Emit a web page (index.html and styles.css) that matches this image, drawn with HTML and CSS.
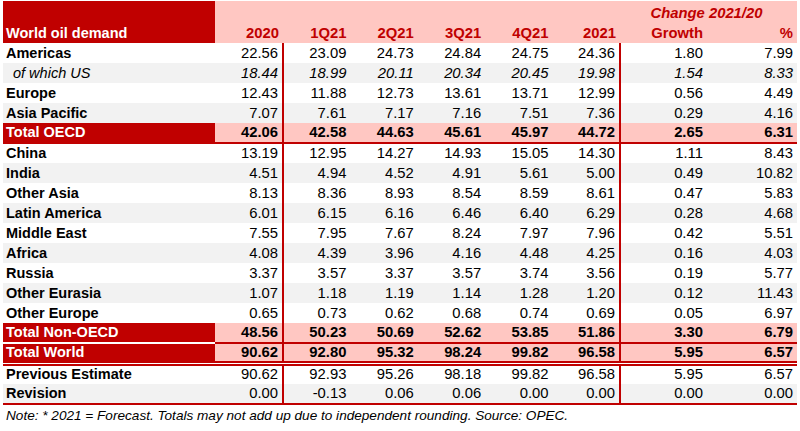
FILE: index.html
```html
<!DOCTYPE html>
<html>
<head>
<meta charset="utf-8">
<link rel="stylesheet" href="styles.css">
</head>
<body>
<div class="wrap">
<table class="t">
  <colgroup>
    <col class="c-label"><col class="c-n0"><col class="c-n"><col class="c-n"><col class="c-n"><col class="c-n"><col class="c-n"><col class="c-g"><col class="c-p">
  </colgroup>
  <thead>
    <tr class="h1">
      <th class="hl" rowspan="2">World oil demand</th>
      <th class="hn"></th><th class="hn"></th><th class="hn"></th><th class="hn"></th><th class="hn"></th><th class="hn"></th>
      <th class="hn chg" colspan="2">Change 2021/20</th>
    </tr>
    <tr class="h2">
      <th class="hn">2020</th><th class="hn">1Q21</th><th class="hn">2Q21</th><th class="hn">3Q21</th><th class="hn">4Q21</th><th class="hn">2021</th><th class="hn">Growth</th><th class="hn">%</th>
    </tr>
  </thead>
  <tbody>
    <tr class="w"><td class="l">Americas</td><td>22.56</td><td class="vl">23.09</td><td>24.73</td><td>24.84</td><td>24.75</td><td>24.36</td><td class="vl">1.80</td><td>7.99</td></tr>
    <tr class="g it"><td class="l sub">of which US</td><td>18.44</td><td class="vl">18.99</td><td>20.11</td><td>20.34</td><td>20.45</td><td>19.98</td><td class="vl">1.54</td><td>8.33</td></tr>
    <tr class="w"><td class="l">Europe</td><td>12.43</td><td class="vl">11.88</td><td>12.73</td><td>13.61</td><td>13.71</td><td>12.99</td><td class="vl">0.56</td><td>4.49</td></tr>
    <tr class="g"><td class="l">Asia Pacific</td><td>7.07</td><td class="vl">7.61</td><td>7.17</td><td>7.16</td><td>7.51</td><td>7.36</td><td class="vl">0.29</td><td>4.16</td></tr>
    <tr class="tot oecd"><td class="l">Total OECD</td><td>42.06</td><td class="vl">42.58</td><td>44.63</td><td>45.61</td><td>45.97</td><td>44.72</td><td class="vl">2.65</td><td>6.31</td></tr>
    <tr class="w"><td class="l">China</td><td>13.19</td><td class="vl">12.95</td><td>14.27</td><td>14.93</td><td>15.05</td><td>14.30</td><td class="vl">1.11</td><td>8.43</td></tr>
    <tr class="g"><td class="l">India</td><td>4.51</td><td class="vl">4.94</td><td>4.52</td><td>4.91</td><td>5.61</td><td>5.00</td><td class="vl">0.49</td><td>10.82</td></tr>
    <tr class="w"><td class="l">Other Asia</td><td>8.13</td><td class="vl">8.36</td><td>8.93</td><td>8.54</td><td>8.59</td><td>8.61</td><td class="vl">0.47</td><td>5.83</td></tr>
    <tr class="g"><td class="l">Latin America</td><td>6.01</td><td class="vl">6.15</td><td>6.16</td><td>6.46</td><td>6.40</td><td>6.29</td><td class="vl">0.28</td><td>4.68</td></tr>
    <tr class="w"><td class="l">Middle East</td><td>7.55</td><td class="vl">7.95</td><td>7.67</td><td>8.24</td><td>7.97</td><td>7.96</td><td class="vl">0.42</td><td>5.51</td></tr>
    <tr class="g"><td class="l">Africa</td><td>4.08</td><td class="vl">4.39</td><td>3.96</td><td>4.16</td><td>4.48</td><td>4.25</td><td class="vl">0.16</td><td>4.03</td></tr>
    <tr class="w"><td class="l">Russia</td><td>3.37</td><td class="vl">3.57</td><td>3.37</td><td>3.57</td><td>3.74</td><td>3.56</td><td class="vl">0.19</td><td>5.77</td></tr>
    <tr class="g"><td class="l">Other Eurasia</td><td>1.07</td><td class="vl">1.18</td><td>1.19</td><td>1.14</td><td>1.28</td><td>1.20</td><td class="vl">0.12</td><td>11.43</td></tr>
    <tr class="w"><td class="l">Other Europe</td><td>0.65</td><td class="vl">0.73</td><td>0.62</td><td>0.68</td><td>0.74</td><td>0.69</td><td class="vl">0.05</td><td>6.97</td></tr>
    <tr class="tot"><td class="l">Total Non-OECD</td><td>48.56</td><td class="vl">50.23</td><td>50.69</td><td>52.62</td><td>53.85</td><td>51.86</td><td class="vl">3.30</td><td>6.79</td></tr>
    <tr class="tot world"><td class="l">Total World</td><td>90.62</td><td class="vl">92.80</td><td>95.32</td><td>98.24</td><td>99.82</td><td>96.58</td><td class="vl">5.95</td><td>6.57</td></tr>
    <tr class="w"><td class="l">Previous Estimate</td><td>90.62</td><td class="vl">92.93</td><td>95.26</td><td>98.18</td><td>99.82</td><td>96.58</td><td class="vl">5.95</td><td>6.57</td></tr>
    <tr class="g last"><td class="l">Revision</td><td>0.00</td><td class="vl">-0.13</td><td>0.06</td><td>0.06</td><td>0.00</td><td>0.00</td><td class="vl">0.00</td><td>0.00</td></tr>
  </tbody>
</table>
<p class="note">Note: * 2021 = Forecast. Totals may not add up due to independent rounding. Source: OPEC.</p>
</div>
</body>
</html>
```

FILE: styles.css
```css
html, body {
  margin: 0;
  padding: 0;
  background: #ffffff;
}
body {
  font-family: "Liberation Sans", Arial, sans-serif;
  color: #000000;
}
.wrap {
  padding: 1px 3px 0 3px;
}
.t {
  border-collapse: collapse;
  table-layout: fixed;
  width: 794px;
  font-size: 14.8px;
}
.c-label { width: 212px; }
.c-n0 { width: 68px; }
.c-n { width: 67.4px; }
.c-g { width: 87px; }
.c-p { width: 90px; }

.t th, .t td {
  padding: 0 4px 0 0;
  white-space: nowrap;
  overflow: hidden;
  line-height: 17px;
}
.h1 { height: 21px; }
.h2 { height: 21px; }
.hl {
  background: #c00000;
  color: #ffffff;
  font-weight: bold;
  text-align: left;
  vertical-align: bottom;
  font-size: 14.5px;
  padding: 0 0 1px 3px !important;
}
.hn {
  background: #ffc7c2;
  color: #c00000;
  font-weight: bold;
  text-align: right;
  vertical-align: bottom;
  padding-bottom: 1px !important;
}
.chg {
  font-style: italic;
  text-align: center;
  vertical-align: middle;
  padding: 3px 4px 0 0 !important;
}
.t tbody tr { height: 20px; }
.t tbody tr.world { height: 19px; }
.t td {
  text-align: right;
  vertical-align: middle;
}
.t td.l {
  text-align: left;
  font-weight: bold;
  font-size: 14.5px;
  padding-left: 3px;
}
.t td.sub {
  font-weight: normal;
  padding-left: 10px;
}
.t td.vl {
  border-left: 2px solid #c00000;
}
.w td { background: #ffffff; }
.g td { background: #f2f2f2; }
.it td { font-style: italic; }

.tot td {
  background: #ffc7c2;
  font-weight: bold;
}
.tot td.l {
  background: #c00000;
  color: #ffffff;
}
.oecd td { border-bottom: 2px solid #c00000; }
.world td { border-top: 2px solid #c00000; border-bottom: 5px double #c00000; }
.world td.l { border-top: 2px solid #ffffff; border-bottom: 5px double #c00000; }
.last td { border-bottom: 2px solid #c00000; }

.note {
  margin: 0;
  padding: 2px 0 0 3px;
  font-size: 13.6px;
  font-style: italic;
  line-height: 17px;
}
```
